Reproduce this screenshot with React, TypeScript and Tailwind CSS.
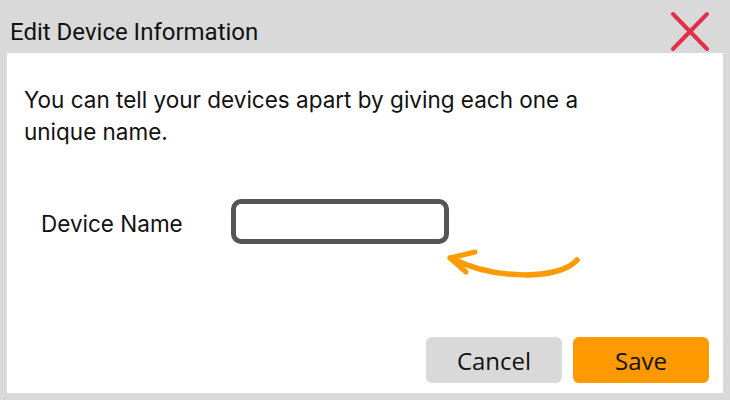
import React from "react";

export default function App() {
  return (
    <div className="w-[730px] h-[400px] bg-[#d9d9d9] flex flex-col overflow-hidden">
      <div className="h-[53px] relative flex items-center pl-[10px] pt-[10px]">
        <span className="text-[24px] text-[#111] leading-none" style={{ fontFamily: "Roboto, sans-serif" }}>
          Edit Device Information
        </span>
        <svg className="absolute left-[668px] top-[9px]" width="44" height="45" viewBox="0 0 44 45">
          <line x1="5" y1="5" x2="39" y2="40" stroke="#e2304b" strokeWidth="4" strokeLinecap="round" />
          <line x1="39" y1="5" x2="5" y2="40" stroke="#e2304b" strokeWidth="4" strokeLinecap="round" />
        </svg>
      </div>
      <div
        className="mx-[7px] h-[340px] bg-white flex flex-col pl-[17px] pr-[14px] pt-[31px]"
        style={{ fontFamily: "Inter, sans-serif" }}
      >
        <p className="text-[22.5px] leading-[32px] text-[#111] w-[600px]">
          You can tell your devices apart by giving each one a unique name.
        </p>
        <div className="flex items-center mt-[51px] relative">
          <span className="ml-[17px] text-[22.5px] text-[#111] w-[190px] pt-[4px]">Device Name</span>
          <div className="w-[218px] h-[45px] border-[5px] border-[#555555] rounded-[10px]" />
          <svg className="absolute left-[421px] top-[47px]" width="140" height="36" viewBox="0 0 140 36">
            <path d="M 132 14 C 115 34, 50 34, 8 13" fill="none" stroke="#ff9a00" strokeWidth="5.5" strokeLinecap="round" />
            <path d="M 5 12 L 30 6" fill="none" stroke="#ff9a00" strokeWidth="5" strokeLinecap="round" />
            <path d="M 5 12 L 21 26" fill="none" stroke="#ff9a00" strokeWidth="5" strokeLinecap="round" />
          </svg>
        </div>
        <div className="flex justify-end gap-[11px] mt-auto mb-[10px]" style={{ fontFamily: "'Open Sans', sans-serif" }}>
          <button className="w-[136px] h-[46px] rounded-[6px] bg-[#d9d9d9] text-[24px] text-[#111] pt-[2px]">Cancel</button>
          <button className="w-[136px] h-[46px] rounded-[6px] bg-[#ff9900] text-[24px] text-[#111] pt-[2px]">Save</button>
        </div>
      </div>
      <div className="h-[7px]" />
    </div>
  );
}
